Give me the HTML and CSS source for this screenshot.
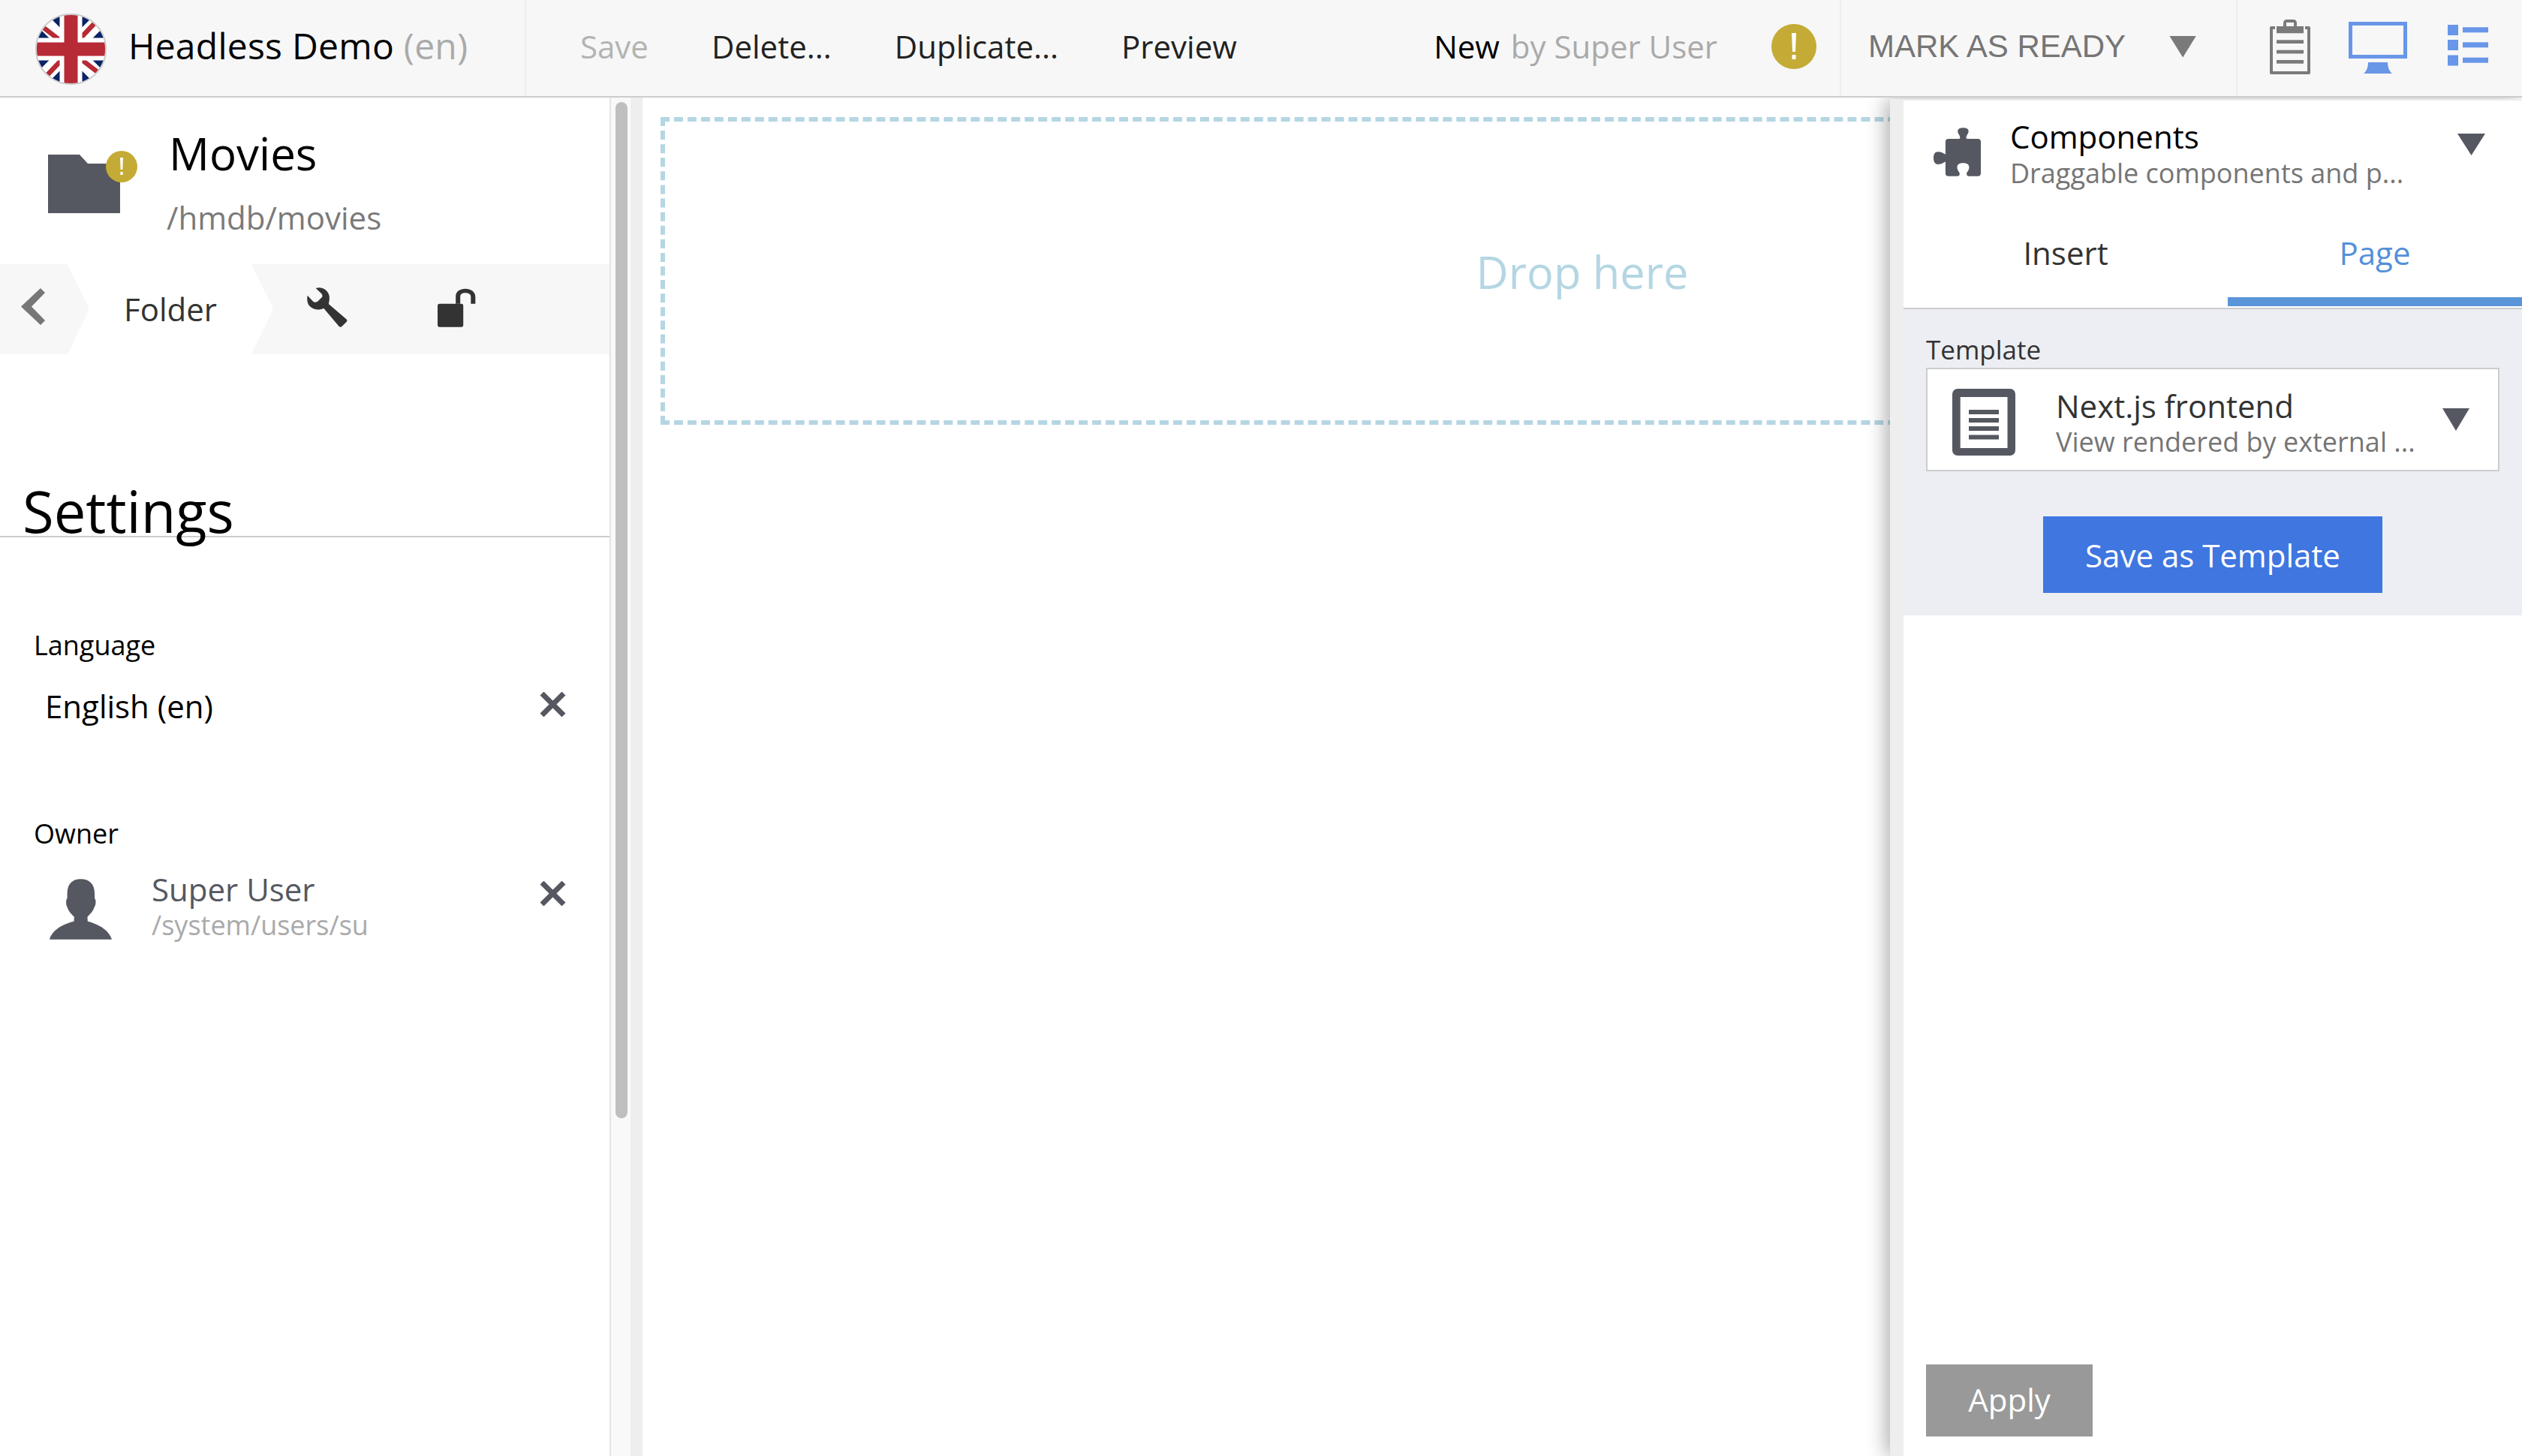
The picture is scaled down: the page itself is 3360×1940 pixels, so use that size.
FILE: index.html
```html
<!DOCTYPE html>
<html lang="en">
<head>
	<meta charset="UTF-8">
	<title>Headless Demo</title>
	<link rel="stylesheet" href="styles.css">
</head>
<body>
	<header class="topbar">
		<div class="brand">
			<svg class="flag" viewBox="0 0 95 95">
				<defs><clipPath id="flagClip"><circle cx="47.5" cy="47.5" r="46"/></clipPath></defs>
				<g clip-path="url(#flagClip)">
					<rect width="95" height="95" fill="#0a2466"/>
					<path d="M0 0L95 95M95 0L0 95" stroke="#fff" stroke-width="20"/>
					<path d="M10 18L32 35M80 12L60 33M14 84L34 63M83 78L61 61" stroke="#b72b36" stroke-width="6.5"/>
					<path d="M47.5 0V95M0 47.5H95" stroke="#fff" stroke-width="30"/>
					<path d="M47.5 0V95M0 47.5H95" stroke="#b72b36" stroke-width="18"/>
				</g>
				<circle cx="47.5" cy="47.5" r="46.5" fill="none" stroke="#ccc" stroke-width="2"/>
			</svg>
			<span class="brand-name">Headless Demo <span class="muted">(en)</span></span>
		</div>
		<div class="actions">
			<span class="action disabled">Save</span>
			<span class="action">Delete...</span>
			<span class="action">Duplicate...</span>
			<span class="action">Preview</span>
			<span class="status">New <span class="muted by">by Super User</span></span>
			<svg class="warn" viewBox="0 0 60 60">
				<circle cx="30" cy="30" r="30" fill="#c4ab35"/>
				<path d="M27 12h6l-1 25h-4z" fill="#fff"/>
				<rect x="27.5" y="41" width="5" height="6" fill="#fff"/>
			</svg>
		</div>
		<div class="mark">
			<span class="mark-label">MARK AS READY</span>
			<span class="caret caret-head"></span>
		</div>
		<div class="views">
			<svg class="icon-clip" viewBox="0 0 54 73" fill="#7a7a7a">
				<path d="M7 9H2a2 2 0 0 0-2 2v60a2 2 0 0 0 2 2h50a2 2 0 0 0 2-2V11a2 2 0 0 0-2-2h-5v4h3v56H4V13h3z"/>
				<path d="M9 9h9V5q0-5 5-5h8q5 0 5 5v4h9v9.300H9zM22 4v5h10V4z" fill-rule="evenodd"/>
				<rect x="9" y="27.300" width="36" height="4.700"/>
				<rect x="9" y="40.700" width="36" height="4.700"/>
				<rect x="9" y="54" width="36" height="4.700"/>
			</svg>
			<svg class="icon-screen" viewBox="0 0 78 69" fill="#6896e8">
				<path d="M0 0H78V49H0zM5 5V44H73V5z" fill-rule="evenodd"/>
				<path d="M26 54H52C52 60 54 66 58 69H20C24 66 26 60 26 54z"/>
			</svg>
			<svg class="icon-list" viewBox="0 0 54 55" fill="#6896e8">
				<rect width="14" height="14"/><rect x="20" y="3.300" width="34" height="7"/>
				<rect y="20" width="14" height="14"/><rect x="20" y="23.300" width="34" height="7"/>
				<rect y="40.500" width="14" height="14"/><rect x="20" y="43.700" width="34" height="7"/>
			</svg>
		</div>
	</header>

	<main class="workspace">
		<aside class="sidebar">
			<div class="page-head">
				<div class="folder">
					<svg class="folder-icon" viewBox="0 0 96 78"><path d="M0 0H42L53 12H96V78H0Z" fill="#555860"/></svg>
					<svg class="folder-badge" viewBox="0 0 42 42">
						<circle cx="21" cy="21" r="21" fill="#c4ab35"/>
						<path d="M19 9h4l-.7 16h-2.600z" fill="#fff"/>
						<rect x="19.300" y="28" width="3.400" height="4" fill="#fff"/>
					</svg>
				</div>
				<div>
					<div class="page-title">Movies</div>
					<div class="page-path">/hmdb/movies</div>
				</div>
			</div>
			<nav class="toolbar">
				<div class="back">
					<svg class="back-icon" viewBox="0 0 32 49"><path d="M26 0L32 6L14 24.500L32 43L26 49L0 24.500Z" fill="#777"/></svg>
				</div>
				<div class="tab-active">Folder</div>
				<svg class="wrench" viewBox="27 25 165 165">
					<path d="M63 28C85 20 115 35 118 62C119 75 117 85 115 92L188 155Q192 160 188 165L168 185Q162 188 157 183L95 110C80 118 55 118 40 103C28 92 26 75 29 58L52 82Q60 88 70 82L88 65Q92 58 86 50Z" fill="#333"/>
				</svg>
				<svg class="lock" viewBox="550 28 152 155" fill="#333">
					<rect x="550" y="90" width="102" height="92" rx="8"/>
					<path d="M622 90V60C622 40 640 30 660 30C682 30 700 42 700 62V90H682V62C682 52 672 47 660 47C648 47 640 52 640 62V90Z"/>
				</svg>
			</nav>
			<h2 class="settings-title">Settings</h2>
			<div class="field-label field-first">Language</div>
			<div class="value-row lang-row">
				<span class="lang-name">English (en)</span>
				<svg class="remove" viewBox="0 0 35 33"><path d="M3 2L32 31M32 2L3 31" stroke="#555860" stroke-width="7"/></svg>
			</div>
			<div class="field-label field-owner">Owner</div>
			<div class="value-row owner-row">
				<svg class="user" viewBox="48 33 250 242">
					<path d="M173 33C205 33 228 50 229 90L229 110C235 115 235 135 228 145C222 165 208 175 200 185L201 203C240 212 285 235 298 275H48C60 235 105 212 146 203L147 185C138 175 125 165 119 145C113 135 113 115 119 110L119 90C120 50 142 33 173 33Z" fill="#555860"/>
				</svg>
				<div>
					<div class="owner-name">Super User</div>
					<div class="owner-path">/system/users/su</div>
				</div>
				<svg class="remove remove-owner" viewBox="0 0 35 33"><path d="M3 2L32 31M32 2L3 31" stroke="#555860" stroke-width="7"/></svg>
			</div>
		</aside>
		<div class="scroll-track"><div class="scroll-thumb"></div></div>
		<div class="gutter"></div>
		<section class="canvas">
			<div class="dropzone">Drop here</div>
		</section>

		<aside class="panel">
			<div class="panel-head">
				<svg class="puzzle" viewBox="17 33 190 195">
					<path d="M77 78H118C124 78 126 72 120 62C110 48 112 33 136 33C160 33 162 48 152 62C146 72 148 78 154 78H195Q207 78 207 90V216Q207 228 195 228H160Q150 228 150 218C150 210 160 205 160 192C160 180 150 175 136 175C122 175 112 180 112 192C112 205 122 210 122 218Q122 228 112 228H77Q65 228 65 216V170C60 172 50 180 35 180C22 180 17 170 17 155C17 140 22 130 35 130C50 130 60 138 65 140V90Q65 78 77 78Z" fill="#555860"/>
				</svg>
				<div class="panel-text">
					<div class="panel-title">Components</div>
					<div class="panel-sub">Draggable components and p...</div>
				</div>
				<span class="caret caret-panel"></span>
			</div>
			<div class="tabs">
				<div class="tab tab-insert">Insert</div>
				<div class="tab tab-page">Page</div>
			</div>
			<div class="template">
				<div class="template-label">Template</div>
				<div class="select">
					<svg class="doc" viewBox="0 0 84 89">
						<rect width="84" height="89" rx="7" fill="#555860"/>
						<rect x="10.700" y="11" width="62.800" height="68" fill="#fff"/>
						<path d="M22 28h40v6H22zM22 39h40v6H22zM22 50h40v6H22zM22 61.500h40v6H22z" fill="#555860"/>
					</svg>
					<div class="select-text">
						<div class="select-title">Next.js frontend</div>
						<div class="select-sub">View rendered by external ...</div>
					</div>
					<span class="caret caret-select"></span>
				</div>
				<button class="save-template" type="button">Save as Template</button>
			</div>
			<button class="apply" type="button">Apply</button>
		</aside>
	</main>
</body>
</html>
```
FILE: styles.css
```css
* {
	box-sizing: border-box;
}
body {
	margin: 0;
	width: 3360px;
	height: 1940px;
	overflow: hidden;
	background: #fff;
	color: #000;
	font-family: "Open Sans", "Noto Sans", sans-serif;
	font-size: 42px;
}
svg {
	display: block;
	flex: none;
}
.muted {
	color: #aaa;
}
.caret {
	display: block;
	flex: none;
	clip-path: polygon(0 0, 100% 0, 50% 100%);
}

/* top bar */
.topbar {
	position: relative;
	z-index: 2;
	display: flex;
	height: 130px;
	background: #f7f7f7;
	border-bottom: 2px solid #ccc;
}
.brand {
	display: flex;
	align-items: center;
	width: 701px;
	padding-left: 47px;
	border-right: 2px solid #eee;
}
.flag {
	width: 95px;
	height: 95px;
	margin-top: 3px;
}
.brand-name {
	margin-left: 29px;
	padding-bottom: 7px;
	font-size: 48px;
	letter-spacing: 0.25px;
}
.actions {
	display: flex;
	align-items: center;
	gap: 84px;
	width: 1752px;
	padding-left: 72px;
	padding-right: 31px;
	border-right: 2px solid #eee;
}
.action {
	padding-bottom: 5px;
	color: #222;
}
.action.disabled {
	color: #b3b3b3;
}
.status {
	margin-left: auto;
	margin-right: -12px;
	padding-bottom: 5px;
}
.by {
	margin-left: 4px;
}
.warn {
	width: 60px;
	height: 60px;
	margin-bottom: 4px;
}
.mark {
	display: flex;
	align-items: center;
	width: 528px;
	padding-left: 36px;
	border-right: 2px solid #eee;
}
.mark-label {
	padding-bottom: 5px;
	font-family: "Liberation Sans", Arial, sans-serif;
	color: #757575;
}
.caret-head {
	width: 36px;
	height: 29px;
	margin-left: 58px;
	margin-bottom: 4px;
	background: #7a7a7a;
}
.views {
	display: flex;
	flex: 1;
	padding-left: 43px;
}
.icon-clip {
	width: 54px;
	height: 73px;
	margin-top: 26px;
}
.icon-screen {
	width: 78px;
	height: 69px;
	margin-top: 29px;
	margin-left: 51px;
}
.icon-list {
	width: 54px;
	height: 55px;
	margin-top: 33px;
	margin-left: 54px;
}

/* main area */
.workspace {
	position: relative;
	display: flex;
	height: 1810px;
}
.sidebar {
	width: 814px;
	border-right: 2px solid #e5e5e5;
}
.page-head {
	display: flex;
	height: 222px;
	padding-top: 39px;
	padding-left: 64px;
}
.folder {
	position: relative;
	margin-top: 37px;
	margin-right: 62px;
}
.folder-icon {
	width: 96px;
	height: 78px;
}
.folder-badge {
	position: absolute;
	top: -5px;
	left: 77px;
	width: 42px;
	height: 42px;
}
.page-title {
	margin-left: 3px;
	font-size: 60px;
	line-height: 70px;
}
.page-path {
	margin-top: 23px;
	line-height: 56px;
	color: #7a7a7a;
}
.toolbar {
	display: flex;
	align-items: center;
	height: 120px;
	background: #f7f7f7;
}
.back {
	width: 90px;
	padding-left: 28px;
}
.back-icon {
	width: 32px;
	height: 49px;
	margin-bottom: 7px;
}
.tab-active {
	width: 274px;
	height: 120px;
	padding-left: 75px;
	line-height: 120px;
	color: #333;
	background: #fff;
	clip-path: polygon(0 0, 245px 0, 274px 50%, 245px 100%, 0 100%, 29px 50%);
}
.wrench {
	width: 54px;
	height: 54px;
	margin-left: 45px;
	margin-bottom: 4px;
}
.lock {
	width: 51px;
	height: 52px;
	margin-left: 120px;
	margin-bottom: 4px;
}
.settings-title {
	height: 244px;
	margin: 0;
	padding-top: 176px;
	padding-left: 30px;
	border-bottom: 2px solid #ccc;
	font-size: 76px;
	font-weight: normal;
	line-height: 66px;
}
.field-label {
	padding-left: 45px;
	font-size: 36px;
	line-height: 48px;
}
.field-first {
	margin-top: 120px;
}
.field-owner {
	margin-top: 118px;
}
.value-row {
	display: flex;
	align-items: flex-start;
	padding-right: 58px;
}
.lang-row {
	margin-top: 29px;
	padding-left: 60px;
}
.lang-name {
	line-height: 56px;
}
.remove {
	width: 35px;
	height: 33px;
	margin-top: 9px;
	margin-left: auto;
}
.owner-row {
	margin-top: 28px;
	padding-left: 66px;
}
.user {
	width: 83px;
	height: 81px;
	margin-top: 8px;
	margin-right: 53px;
}
.owner-name {
	line-height: 44px;
	color: #555860;
}
.owner-path {
	margin-top: 2px;
	font-size: 36px;
	line-height: 48px;
	color: #aaa;
}
.remove-owner {
	margin-top: 11px;
}
.scroll-track {
	width: 26px;
	padding: 6px 4px 0 6px;
	background: #f9f9f9;
}
.scroll-thumb {
	height: 1354px;
	border-radius: 8px;
	background: #bfbfbf;
}
.gutter {
	width: 16px;
	background: #eee;
}
.canvas {
	flex: 1;
	padding: 26px 24px;
}
.dropzone {
	display: flex;
	align-items: center;
	justify-content: center;
	height: 410px;
	border: 6px dashed #b5d6e3;
	font-size: 59.5px;
	color: #b5d6e3;
}

/* right panel */
.panel {
	position: absolute;
	top: 2px;
	right: 0;
	bottom: 0;
	display: flex;
	flex-direction: column;
	width: 842px;
	background: #fff;
	border-left: 18px solid #eee;
	border-top: 2px solid #eee;
	box-shadow: -6px 0 24px rgba(0, 0, 0, 0.3);
}
.panel-head {
	display: flex;
	align-items: flex-start;
	height: 175px;
	padding-left: 40px;
}
.puzzle {
	width: 63px;
	height: 65px;
	margin-top: 36px;
}
.panel-text {
	margin-top: 23px;
	margin-left: 39px;
}
.panel-title {
	line-height: 49px;
}
.panel-sub {
	margin-top: 2px;
	font-size: 36px;
	line-height: 46px;
	color: #757575;
}
.caret-panel {
	width: 37px;
	height: 29px;
	margin-top: 44px;
	margin-left: auto;
	margin-right: 49px;
	background: #555860;
}
.tabs {
	display: flex;
	padding-bottom: 2px;
	border-bottom: 2px solid #ccc;
}
.tab {
	height: 99px;
	padding-bottom: 31px;
	border-bottom: 12px solid transparent;
	line-height: 56px;
	text-align: center;
}
.tab-insert {
	width: 432px;
	color: #333;
}
.tab-page {
	width: 392px;
	color: #5490d9;
	border-bottom-color: #5a94d9;
}
.template {
	height: 408px;
	padding: 30px 30px 0;
	background: #edeef3;
}
.template-label {
	font-size: 35px;
	line-height: 48px;
	color: #333;
}
.select {
	display: flex;
	align-items: flex-start;
	height: 138px;
	padding-left: 33px;
	background: #fff;
	border: 2px solid #cccdd0;
}
.doc {
	width: 84px;
	height: 89px;
	margin-top: 26px;
}
.select-text {
	margin-top: 24px;
	margin-left: 54px;
}
.select-title {
	line-height: 50px;
	color: #333;
}
.select-sub {
	font-size: 36px;
	line-height: 46px;
	color: #757575;
}
.caret-select {
	width: 36px;
	height: 30px;
	margin-top: 52px;
	margin-left: auto;
	margin-right: 38px;
	background: #555860;
}
button {
	display: block;
	padding: 0;
	border: 0;
	color: #fff;
	font-family: inherit;
}
.save-template {
	width: 452px;
	height: 102px;
	margin: 60px auto 0;
	font-size: 42px;
	background: #3f76e0;
}
.apply {
	width: 222px;
	height: 96px;
	margin-top: auto;
	margin-bottom: 26px;
	margin-left: 30px;
	padding-bottom: 4px;
	font-size: 42px;
	background: #999;
}
```
